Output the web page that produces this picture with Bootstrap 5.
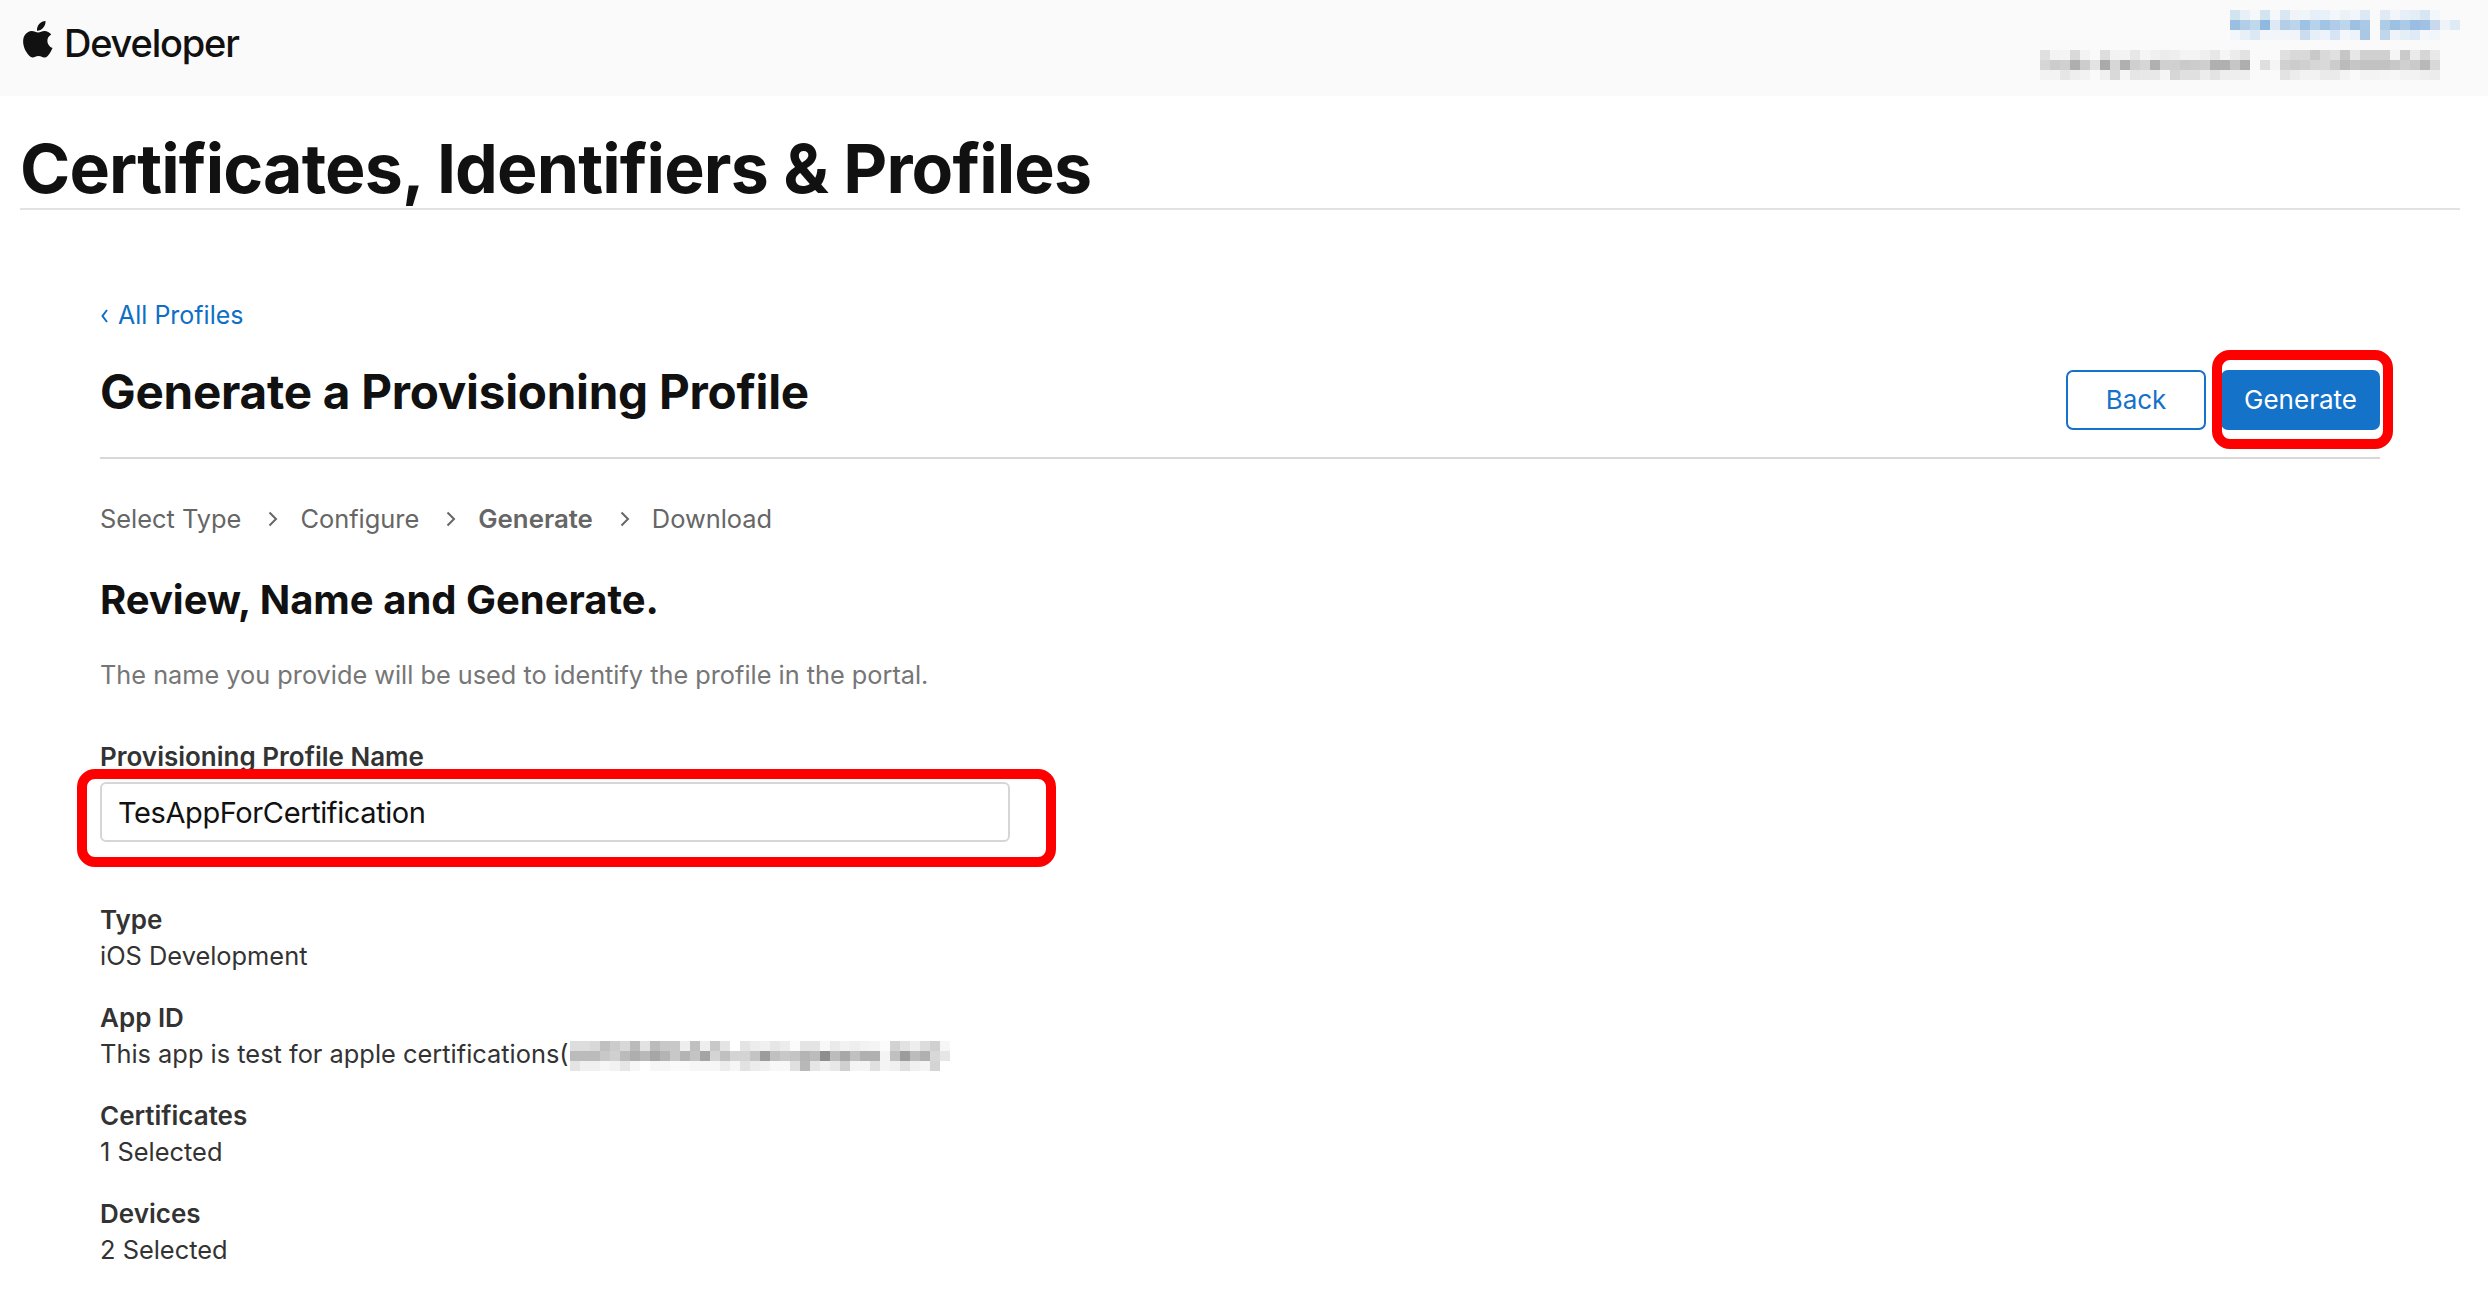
<!DOCTYPE html>
<html lang="en">
<head>
  <meta charset="UTF-8" />
  <meta name="viewport" content="width=device-width, initial-scale=1.0" />
  <title>Certificates, Identifiers &amp; Profiles</title>
  <link href="https://cdn.jsdelivr.net/npm/bootstrap@5.3.3/dist/css/bootstrap.min.css" rel="stylesheet" />
  <style>
    body { font-family: Inter, "Liberation Sans", sans-serif; color: #111; background: #fff; height: 1308px; overflow: hidden; position: relative; }
    .dev-bar { background: #fafafa; height: 96px; padding: 10px 28px 0 22px; }
    .dev-brand { font-size: 38px; font-weight: 500; letter-spacing: -1.2px; line-height: 44px; color: #111; text-decoration: none; margin-top: 11px; }
    .dev-brand svg { margin-top: -8px; margin-right: 10px; }
    .page-title { font-size: 68px; font-weight: 700; letter-spacing: -.86px; line-height: 80px; margin: 0 28px 0 20px; padding: 32px 0 0; height: 114px; border-bottom: 2px solid #e2e2e2; }
    .main-area { padding: 0 108px 0 100px; }
    .back-link { font-size: 25px; line-height: 32px; color: #0f6fc6; text-decoration: none; display: flex; align-items: center; margin-top: 89px; }
    .back-link svg { margin: 1px 10px 0 1px; }
    .head-row { height: 128px; border-bottom: 2px solid #d8d8d8; }
    .head-row h1 { font-size: 47.6px; font-weight: 700; line-height: 56px; margin: 0; padding-top: 33px; letter-spacing: -.25px; }
    .btn-back, .btn-generate { font-size: 26px; height: 60px; width: 140px; border-radius: 7px; padding: 0 0 2px; margin-top: 39px; }
    .btn-back { border: 2px solid #1472c9; color: #1472c9; background: #fff; }
    .btn-generate { width: 159px; background: #1472c9; border: 0; color: #fff; margin-left: 15px; }
    .step-row { font-size: 25.4px; line-height: 32px; color: #666; margin-top: 44px; }
    .step-row b { font-size: 25.8px; font-weight: 600; }
    .step-row svg { margin: 0 22px 0 27px; }
    .review-head { font-size: 40px; font-weight: 700; line-height: 48px; margin: 41px 0 0; }
    .review-text { font-size: 25.3px; line-height: 32px; color: #767676; margin: 35px 0 0; }
    .name-label { font-size: 26px; font-weight: 600; line-height: 32px; color: #333; margin: 50px 0 0; display: block; }
    .name-input { width: 910px; height: 60px; border: 2px solid #d6d6d6; border-radius: 6px; font-size: 29px; letter-spacing: -.4px; padding: 1px 16px 0; color: #111; margin-top: 9px; font-family: inherit; }
    .info-list { margin-top: 60px; font-size: 25.4px; line-height: 36px; color: #333; }
    .info-list dt { font-size: 26px; font-weight: 600; }
    .info-list dd { margin: 0 0 26px; }
    .info-list svg { vertical-align: -8px; margin-left: -6px; }
    .red-mark { position: absolute; border: 10px solid #f00; border-radius: 18px; }
    .mark-a { left: 2212px; top: 350px; width: 181px; height: 99px; }
    .mark-b { left: 77px; top: 769px; width: 979px; height: 98px; }
  </style>
</head>
<body>

  <header class="dev-bar d-flex justify-content-between align-items-start">
    <a href="#" class="dev-brand d-flex align-items-center">
      <svg width="32" height="38" viewBox="0 0 31 38" fill="#111"><path d="M23 1c.3 3-1 5.300-2.500 7-1.500 1.700-3.800 2.900-6 2.700-.3-2.800 1-5.300 2.400-6.900C18.500 2 21 .9 23 1zM30 28c-.8 1.900-1.200 2.700-2.200 4.400-1.500 2.300-3.500 5.100-6 5.100-2.200 0-2.800-1.400-5.800-1.400s-3.700 1.400-5.900 1.400c-2.500 0-4.400-2.600-5.900-4.900C.1 26.400-.3 19.100 2.200 15.300c1.700-2.700 4.500-4.300 7-4.300 2.700 0 4.300 1.500 6.500 1.500 2.100 0 3.400-1.500 6.500-1.500 2.300 0 4.800 1.300 6.500 3.500-5.700 3.100-4.800 11.200 1.300 13.500z"/></svg>
      Developer
    </a>
    <svg id="userMosaic" width="420" height="70"></svg>
  </header>

  <h2 class="page-title">Certificates, Identifiers &amp; Profiles</h2>

  <main class="main-area">
    <a href="#" class="back-link">
      <svg width="7" height="14" viewBox="0 0 7 14" fill="none" stroke="#0f6fc6" stroke-width="2"><path d="M6 1 1.500 7 6 13"/></svg>
      All Profiles
    </a>

    <div class="head-row d-flex justify-content-between align-items-start">
      <h1>Generate a Provisioning Profile</h1>
      <div class="d-flex align-items-start">
        <button class="btn btn-back">Back</button>
        <button class="btn btn-generate">Generate</button>
      </div>
    </div>

    <div class="step-row d-flex align-items-center">
      <span>Select Type</span>
      <svg width="10" height="16" viewBox="0 0 10 16" fill="none" stroke="#666" stroke-width="2"><path d="M1.500 1.500 8 8l-6.500 6.500"/></svg>
      <span>Configure</span>
      <svg width="10" height="16" viewBox="0 0 10 16" fill="none" stroke="#666" stroke-width="2"><path d="M1.500 1.500 8 8l-6.500 6.500"/></svg>
      <b>Generate</b>
      <svg width="10" height="16" viewBox="0 0 10 16" fill="none" stroke="#666" stroke-width="2"><path d="M1.500 1.500 8 8l-6.500 6.500"/></svg>
      <span>Download</span>
    </div>

    <h3 class="review-head">Review, Name and Generate.</h3>
    <p class="review-text">The name you provide will be used to identify the profile in the portal.</p>

    <label class="name-label" for="profileName">Provisioning Profile Name</label>
    <input type="text" id="profileName" class="form-control name-input" value="TesAppForCertification" />

    <dl class="info-list">
      <dt>Type</dt>
      <dd>iOS Development</dd>
      <dt>App ID</dt>
      <dd>This app is test for apple certifications(.<svg id="appMosaic" width="380" height="30"></svg></dd>
      <dt>Certificates</dt>
      <dd>1 Selected</dd>
      <dt>Devices</dt>
      <dd>2 Selected</dd>
    </dl>
  </main>

  <div class="red-mark mark-a"></div>
  <div class="red-mark mark-b"></div>

  <script>
    // blurred-out account details, drawn as 10px cells
    function mosaicCells(x, y, rows) {
      let out = '';
      rows.forEach((row, r) => {
        row.split(' ').forEach((c, i) => {
          const fill = c.length === 2 ? '#' + c + c + c : '#' + c;
          out += `<rect x="${x + i * 10}" y="${y + r * 10}" width="10" height="10" fill="${fill}"/>`;
        });
      });
      return out;
    }

    const blue = [
      'd3e4f1 e8f0f7 f5f7fa d3e4f1 f5f8fb d8e7f2 f0f4f9 f0f5f9 e6eff7 e8f1f8 f3f6fa ebf1f6 f2f6fa dce8f4 fafafa dfeaf5 f2f5fa e6eff8 e3edf6 d8e6f1 f3f6fb',
      '9bbfe0 b2cde7 c0d8ec 8fb9de dde9f5 b5cee8 bdd5eb 9dc2e3 b7d2ec a1c4e5 b0cce8 bdd6eb 9dc0e3 a9c9e5 fafafa afcce7 9dc1e3 acc9e6 9bbde2 9fc2e4 c8d9ee eef3f8 deeaf4',
      'f3f6fa e8f0f7 dce9f5 f2f5fa f2f5fa f2f5fa f1f4f9 cbdcee e6eef7 eef3fb d6e4f3 f3f6fb eef3f9 a8c8e5 fafafa c0d6eb edf3f9 e4eef7 deeaf5 f3f6fa f2f5fa'
    ];
    const grey = [
      'e0 f3 f4 d9 f3 fa dd f2 f3 e7 f5 f0 ec ee f4 f4 ef e7 f5 ec e2 fa fa fa e0 d9 d9 c9 d9 e0 c6 e7 d0 d0 d0 f5 ca ea d6 e8',
      'd6 cc d0 ae cc e3 aa d6 b0 cf d6 b0 d0 d0 ca cc cf b0 b0 c6 ae fa df f5 d0 cc d0 d6 d9 cc bb c6 c2 c2 c2 c8 d0 ca b8 d8',
      'f3 f3 e6 ee f2 fa f0 d9 f5 e6 e8 e8 f5 d6 e0 e0 ec e3 ee ee ee fa fa fa e3 ec f2 f2 ea ea f3 fa f3 f3 f5 f7 f3 f2 ee ec'
    ];
    const app = [
      'dd dd d8 c0 cc d8 bb e2 bb c8 c8 ee c0 ee c8 e4 ff e4 ec f0 e6 ec fb e4 e4 f8 ea f2 ee f2 f4 fb d2 e2 ee dc d0 f6',
      'bb bb bb c8 d0 bb ae b8 a6 b4 c8 b4 c4 a4 d4 c0 d4 d4 c4 9c c0 c8 c4 b4 bc 8e bc a8 c0 b0 b0 f4 c0 9c bc b0 d8 e6',
      'e4 f0 f0 f6 f2 e6 f6 ff f6 f6 fa fa f6 f6 f6 ec f6 e2 ec f0 f8 f8 e0 b8 e6 f0 e8 d0 f4 f4 e0 f4 f0 e0 f0 f4 d4 ff'
    ];

    document.getElementById('userMosaic').innerHTML = mosaicCells(190, 0, blue) + mosaicCells(0, 40, grey);
    document.getElementById('appMosaic').innerHTML = mosaicCells(0, 0, app);
  </script>

</body>
</html>
